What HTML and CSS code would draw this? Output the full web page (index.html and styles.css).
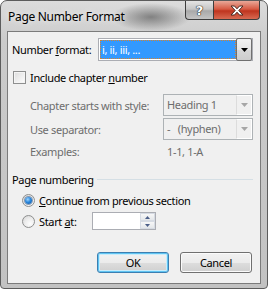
FILE: index.html
```html
<!DOCTYPE html>
<html lang="en">
<head>
    <meta charset="UTF-8">
    <title>Page Number Format</title>
    <link rel="stylesheet" href="styles.css">
</head>
<body>
    <div class="window">
        <div class="titlebar">
            <span class="title">Page Number Format</span>
            <div class="caption-buttons">
                <div class="cap help">?</div>
                <div class="cap close">
                    <svg width="14" height="11" viewBox="0 0 14 11">
                        <path d="M1 1 H4.5 L7 3.8 L9.5 1 H13 L8.8 5.5 L13 10 H9.5 L7 7.2 L4.5 10 H1 L5.2 5.5 Z" fill="#fff" stroke="#4a2a22" stroke-width="1" stroke-linejoin="round"/>
                    </svg>
                </div>
            </div>
        </div>
        <div class="client">
            <div class="row row-format">
                <span class="format-label">Number <u>f</u>ormat:</span>
                <div class="combo format-combo">
                    <div class="selected">i, ii, iii, ...</div>
                    <div class="drop-btn">
                        <svg width="7" height="4" viewBox="0 0 7 4"><path d="M0 0 H7 L3.5 4 Z" fill="#000"/></svg>
                    </div>
                </div>
            </div>

            <div class="row row-check">
                <span class="checkbox"></span>
                <span class="check-label">Include chapter <u>n</u>umber</span>
            </div>

            <div class="row row-style disabled">
                <span class="sub-label">Chapter starts with style:</span>
                <div class="dcombo">
                    <span class="dvalue">Heading 1</span>
                    <span class="ddrop"><svg width="7" height="4" viewBox="0 0 7 4"><path d="M0 0 H7 L3.5 4 Z" fill="#a6a6a6"/></svg></span>
                </div>
            </div>

            <div class="row row-sep disabled">
                <span class="sub-label">Use separator:</span>
                <div class="dcombo">
                    <span class="dvalue">-&nbsp;&nbsp;&nbsp;(hyphen)</span>
                    <span class="ddrop"><svg width="7" height="4" viewBox="0 0 7 4"><path d="M0 0 H7 L3.5 4 Z" fill="#a6a6a6"/></svg></span>
                </div>
            </div>

            <div class="row row-examples disabled">
                <span class="sub-label">Examples:</span>
                <span class="example-value">1-1, 1-A</span>
            </div>

            <div class="row row-group">
                <span class="group-label">Page numbering</span>
                <span class="group-line"></span>
            </div>

            <div class="row row-radio1">
                <span class="radio on"><span class="dot"></span></span>
                <span class="radio-label"><u>C</u>ontinue from previous section</span>
            </div>

            <div class="row row-radio2">
                <span class="radio"></span>
                <span class="radio-label start-label">Start <u>a</u>t:</span>
                <div class="spinbox">
                    <div class="spin">
                        <span class="spin-up"><svg width="5" height="3" viewBox="0 0 5 3"><path d="M0 3 H5 L2.5 0 Z" fill="#4b5e87"/></svg></span>
                        <span class="spin-down"><svg width="5" height="3" viewBox="0 0 5 3"><path d="M0 0 H5 L2.5 3 Z" fill="#4b5e87"/></svg></span>
                    </div>
                </div>
            </div>

            <div class="row row-buttons">
                <button class="btn default">OK</button>
                <button class="btn">Cancel</button>
            </div>
        </div>
    </div>
</body>
</html>
```

FILE: styles.css
```css
body {
    margin: 0;
    background-color: #fff;
    font-family: "Noto Sans", sans-serif;
    font-size: 11px;
    letter-spacing: -0.35px;
    color: #000;
}
.window {
    width: 268px;
    height: 289px;
    box-sizing: border-box;
    border: 1px solid #5c5c5c;
    border-radius: 7px 7px 4px 4px;
    padding: 0 6px 4px 6px;
    background:
        radial-gradient(ellipse 40px 14px at 150px 16px, rgba(60, 60, 60, 0.55), rgba(60, 60, 60, 0)),
        linear-gradient(to bottom, #dcdcdc 0%, #cbcbcb 40px, #c2c2c2 100%);
    display: flex;
    flex-direction: column;
    white-space: nowrap;
}
.titlebar {
    height: 30px;
    display: flex;
    justify-content: space-between;
    align-items: flex-start;
}
.title {
    margin-top: 8px;
    margin-left: 1px;
    line-height: 16px;
    font-size: 12px;
    letter-spacing: -0.3px;
    color: #000;
    text-shadow: 0 0 6px rgba(255, 255, 255, 0.9);
}
.caption-buttons {
    display: flex;
    margin-right: 1px;
}
.cap {
    height: 19px;
    box-sizing: border-box;
    border: 1px solid #3d3d3d;
    border-top: none;
    display: flex;
    align-items: center;
    justify-content: center;
}
.help {
    width: 28px;
    border-right: none;
    border-radius: 0 0 0 4px;
    background: linear-gradient(to bottom, #e4e4e4 0%, #c6c6c6 45%, #a9a9a9 55%, #c4c4c4 100%);
    color: #fff;
    font-weight: bold;
    font-size: 13px;
    letter-spacing: 0;
    font-family: "DejaVu Sans", sans-serif;
    text-shadow: 0 0 1px #222, 0 0 1px #222, 0 0 1px #222;
}
.close {
    width: 47px;
    border-radius: 0 0 4px 0;
    background: linear-gradient(to bottom, #e9a898 0%, #d65a43 45%, #bf341e 55%, #d86a52 100%);
}
.client {
    flex: 1;
    background-color: #f0f0f0;
    border: 1px solid #7b7b7b;
    padding: 6px 7px 10px 4px;
    display: flex;
    flex-direction: column;
}
.row {
    display: flex;
    align-items: center;
}
.row > * {
    flex-shrink: 0;
}
.row-format {
    height: 23px;
}
.format-label {
    width: 86px;
}
.combo {
    box-sizing: border-box;
    border: 1px solid #abadb3;
    background-color: #fff;
    display: flex;
}
.format-combo {
    width: 155px;
    height: 23px;
    padding: 1px 0 1px 1px;
}
.selected {
    flex: 1;
    background-color: #3399ff;
    color: #fff;
    outline: 1px dotted #d9822b;
    outline-offset: -1px;
    padding-left: 2px;
    line-height: 19px;
}
.drop-btn {
    width: 16px;
    margin-top: -2px;
    margin-bottom: -2px;
    box-sizing: border-box;
    border: 1px solid #707070;
    border-radius: 2px;
    background: linear-gradient(to bottom, #f3f3f3 0%, #e6e6e6 50%, #d7d7d7 51%, #cdcdcd 100%);
    display: flex;
    align-items: center;
    justify-content: center;
}
.row-check {
    height: 22px;
    margin-top: 5px;
    padding-left: 1px;
}
.checkbox {
    width: 13px;
    height: 13px;
    box-sizing: border-box;
    border: 1px solid #8e8f8f;
    background: linear-gradient(135deg, #dcdcdc 0%, #f4f4f4 70%, #fff 100%);
    box-shadow: inset 0 0 0 1px #f4f4f4;
}
.check-label {
    margin-left: 4px;
}
.disabled {
    color: #6d6d6d;
    padding-left: 18px;
}
.sub-label {
    width: 133px;
}
.row-style {
    height: 22px;
    margin-top: 6px;
}
.row-sep {
    height: 22px;
    margin-top: 2px;
}
.dcombo {
    width: 90px;
    height: 22px;
    box-sizing: border-box;
    border: 1px solid #adb2b5;
    background-color: #f0f0f0;
    display: flex;
}
.dvalue {
    flex: 1;
    padding-left: 3px;
    line-height: 20px;
}
.ddrop {
    width: 16px;
    box-sizing: border-box;
    border: 1px solid #fff;
    border-left: 1px solid #dcdcdc;
    display: flex;
    align-items: center;
    justify-content: center;
}
.row-examples {
    height: 22px;
}
.example-value {
    padding-left: 4px;
}
.row-group {
    height: 18px;
    margin-top: 8px;
}
.group-label {
    width: 85px;
}
.row .group-line {
    flex: 1 1 auto;
    height: 1px;
    background-color: #d5dfe5;
}
.row-radio1 {
    height: 18px;
    margin-top: 3px;
    padding-left: 10px;
}
.row-radio2 {
    height: 18px;
    margin-top: 3px;
    padding-left: 10px;
}
.radio {
    width: 13px;
    height: 13px;
    box-sizing: border-box;
    border: 1px solid #8e8f8f;
    border-radius: 50%;
    background: radial-gradient(circle at 65% 70%, #fdfdfd 0%, #ececec 50%, #d2d2d2 100%);
    display: flex;
    align-items: center;
    justify-content: center;
}
.dot {
    width: 7px;
    height: 7px;
    border-radius: 50%;
    background: radial-gradient(circle at 40% 35%, #9fd6ff 0%, #2a87dc 45%, #0b4f9c 100%);
    box-shadow: 0 0 0 1px rgba(30, 70, 120, 0.5);
}
.radio-label {
    margin-left: 4px;
}
.start-label {
    width: 53px;
}
.spinbox {
    width: 64px;
    height: 18px;
    box-sizing: border-box;
    border: 1px solid #abadb3;
    background-color: #fff;
    display: flex;
    justify-content: flex-end;
}
.spin {
    width: 15px;
    display: flex;
    flex-direction: column;
}
.spin span {
    flex: 1;
    box-sizing: border-box;
    border: 1px solid #d6dbe3;
    background: linear-gradient(to bottom, #f7f7f7, #e4e7ea);
    display: flex;
    align-items: center;
    justify-content: center;
}
.row-buttons {
    height: 21px;
    margin-top: 22px;
    justify-content: flex-end;
    gap: 11px;
    padding-right: 1px;
}
.btn {
    width: 72px;
    height: 21px;
    box-sizing: border-box;
    border: 1px solid #707070;
    border-radius: 3px;
    background: linear-gradient(to bottom, #f2f2f2 0%, #ebebeb 50%, #dddddd 51%, #cfcfcf 100%);
    font-family: "Noto Sans", sans-serif;
    font-size: 11px;
    letter-spacing: -0.35px;
    color: #000;
    padding: 0;
    box-shadow: inset 0 0 0 1px #fbfbfb;
}
.btn.default {
    border-color: #3c7fb1;
    box-shadow: inset 0 0 0 1px #5fc4f2, inset 0 0 0 2px #c8ecfb;
}
```
